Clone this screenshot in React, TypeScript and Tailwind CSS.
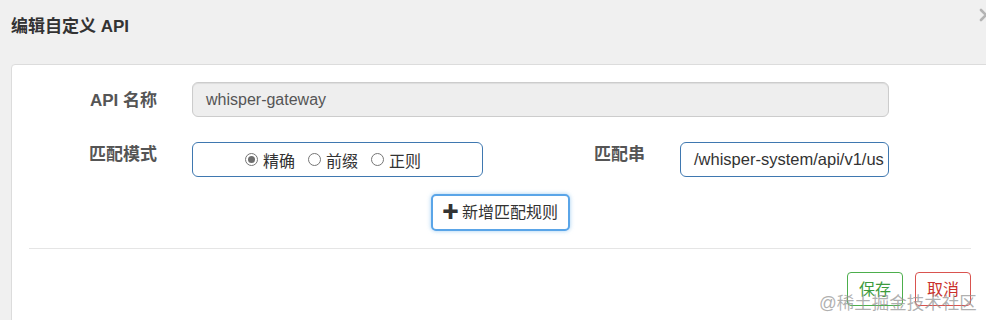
import React from "react";

const font = { fontFamily: '"Liberation Sans", "Noto Sans CJK SC", sans-serif' };

function Radio({ checked, label }: { checked?: boolean; label: string }) {
  return (
    <span className="flex items-center">
      <span className="w-[13px] h-[13px] rounded-full border border-[#767676] bg-white flex items-center justify-center">
        {checked && <span className="w-[7px] h-[7px] rounded-full bg-[#6e6e6e]" />}
      </span>
      <span className="ml-[5px] text-[16px] text-[#333] leading-[20px] translate-y-[2px]">{label}</span>
    </span>
  );
}

export default function App() {
  return (
    <div className="relative w-[986px] h-[320px] overflow-hidden bg-[#f0f0f0]" style={font}>
      <div className="h-[64px] pl-[11px] flex items-center">
        <h4 className="text-[17px] font-bold text-[#333] leading-[20px] -translate-y-[5px]">编辑自定义 API</h4>
      </div>
      <svg className="absolute left-[979px] top-[8px]" width="14" height="14" viewBox="0 0 14 14">
        <path d="M2 2 L12 12 M12 2 L2 12" stroke="#b4b4b4" strokeWidth="2.6" strokeLinecap="round" />
      </svg>

      <div className="ml-[11px] w-[978px] bg-white border border-[#dcdcdc] rounded-tl-[4px] pt-[17px] h-[300px]">
        <div className="flex">
          <div className="w-[145px] text-right text-[17px] font-bold text-[#555] leading-[20px] pt-[9px]">API 名称</div>
          <div className="ml-[35px] w-[697px] h-[35px] rounded-[6px] border border-[#ccc] bg-[#eeeeee] pl-[13px] flex items-center text-[16px] text-[#555] shadow-[inset_0_1px_1px_rgba(0,0,0,0.075)]">
            whisper-gateway
          </div>
        </div>

        <div className="flex mt-[25px]">
          <div className="w-[145px] text-right text-[17px] font-bold text-[#555] leading-[20px] pt-[3px]">匹配模式</div>
          <div className="ml-[35px] w-[291px] h-[35px] rounded-[6px] border border-[#3f78b0] flex items-center pl-[52px] gap-[13px]">
            <Radio checked label="精确" />
            <Radio label="前缀" />
            <Radio label="正则" />
          </div>
          <div className="w-[162px] text-right text-[17px] font-bold text-[#555] leading-[20px] pt-[3px]">匹配串</div>
          <div className="ml-[35px] w-[209px] h-[35px] rounded-[6px] border border-[#3f78b0] pl-[13px] pr-[3px] flex items-center text-[16.5px] text-[#333] overflow-hidden whitespace-nowrap">
            /whisper-system/api/v1/us
          </div>
        </div>

        <div className="flex justify-center mt-[17px]">
          <button className="w-[139px] h-[37px] rounded-[5px] border-2 border-[#5aa5e8] bg-white text-[16px] text-[#333] flex items-center justify-center shadow-[0_0_4px_rgba(102,175,233,0.6)]">
            <span className="font-bold text-[17px] leading-[14px] mr-[3px]">✚</span>
            新增匹配规则
          </button>
        </div>

        <div className="mx-[17px] mt-[17px] border-t border-[#e5e5e5]" />

        <div className="flex justify-end gap-[12px] pr-[17px] mt-[23px]">
          <button className="w-[56px] h-[34px] rounded-[4px] border border-[#4cae4c] bg-white text-[16px] text-[#3d9b3d] flex items-center justify-center pt-[2px]">
            保存
          </button>
          <button className="w-[56px] h-[34px] rounded-[4px] border border-[#d9534f] bg-white text-[16px] text-[#c9302c] flex items-center justify-center pt-[2px]">
            取消
          </button>
        </div>
      </div>

      <span className="absolute left-[819px] top-[293px] text-[17.5px] leading-[20px] text-[rgba(150,150,150,0.75)] whitespace-nowrap">
        @稀土掘金技术社区
      </span>
    </div>
  );
}
